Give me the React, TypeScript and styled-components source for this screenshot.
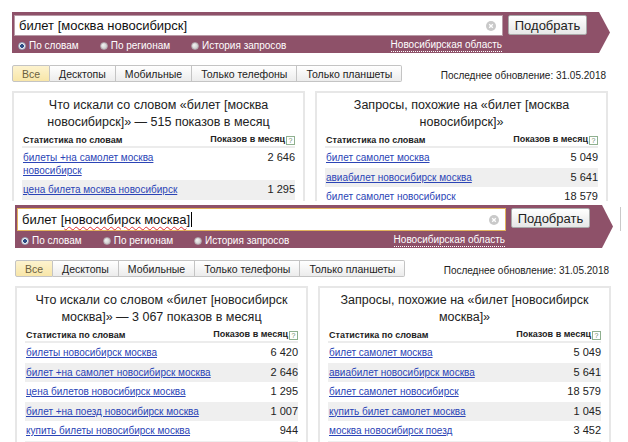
import styled, { createGlobalStyle } from 'styled-components'

type Row = { text: string; count: string }
type Panel = { title: string; rows: Row[] }
type Shot = {
  query: string
  typo?: string
  left: Panel
  right: Panel
}

const GlobalStyle = createGlobalStyle`
  html, body {
    margin: 0;
    padding: 0;
    background: #fff;
  }
  body {
    font-family: "Liberation Sans", Arial, sans-serif;
    color: #222;
  }
`

const Frame = styled.div<{ $x: number; $y: number; $height?: number }>`
  box-sizing: border-box;
  padding: ${(p) => p.$y}px 0 0 ${(p) => p.$x}px;
  height: ${(p) => (p.$height ? `${p.$height}px` : 'auto')};
  overflow: hidden;
  background: #fff;
`

const Inner = styled.div`
  width: 596px;
`

const BarRow = styled.div`
  display: flex;
  align-items: flex-start;
  gap: 7px;
`

const Bar = styled.div<{ $h: number }>`
  flex: none;
  box-sizing: border-box;
  width: 598px;
  height: ${(p) => p.$h}px;
  padding: 3px 0 0 2px;
  background: #8e5169;
  clip-path: polygon(0 0, calc(100% - 11px) 0, 100% 50%, calc(100% - 11px) 100%, 0 100%);
`

const TopLine = styled.div`
  display: flex;
  gap: 5px;
`

const SearchInput = styled.div<{ $focused?: boolean; $h: number }>`
  box-sizing: border-box;
  width: 489px;
  height: ${(p) => p.$h}px;
  display: flex;
  align-items: center;
  padding: 0 6px 0 4px;
  background: #fff;
  border: 1px solid ${(p) => (p.$focused ? '#e2b35c' : '#b89aa6')};
  font-size: 13px;
  color: #111;
`

const QueryText = styled.span`
  flex: 1;
  white-space: nowrap;
`

const Typo = styled.span`
  text-decoration: underline wavy #e03030;
  text-decoration-thickness: 1px;
  text-underline-offset: 2px;
`

const Caret = styled.span`
  display: inline-block;
  width: 1px;
  height: 15px;
  margin-left: 1px;
  vertical-align: -3px;
  background: #000;
`

const ClearIcon = styled.svg`
  flex: none;
  width: 10px;
  height: 10px;
`

const PickButton = styled.button`
  box-sizing: border-box;
  width: 79px;
  height: 20px;
  padding: 0;
  border: 1px solid #a9a9a9;
  border-radius: 2px;
  background: linear-gradient(#ffffff, #e6e6e6);
  font-family: inherit;
  font-size: 13px;
  color: #222;
`

const Options = styled.div`
  box-sizing: border-box;
  width: 489px;
  height: 19px;
  display: flex;
  align-items: center;
  gap: 21px;
  padding-left: 4px;
  font-size: 10px;
  color: #fff;
`

const RadioItem = styled.span`
  display: flex;
  align-items: center;
  gap: 3px;
`

const RadioDot = styled.span<{ $on?: boolean }>`
  box-sizing: border-box;
  width: 8px;
  height: 8px;
  border-radius: 50%;
  background: ${(p) =>
    p.$on
      ? 'radial-gradient(circle, #2c4d86 0 1.6px, #f4f4f4 2.2px)'
      : 'radial-gradient(circle at 35% 35%, #f2f2f2, #bdbdbd)'};
  border: 1px solid ${(p) => (p.$on ? '#9aa8c0' : '#b0a0a8')};
`

const Region = styled.span`
  margin-left: auto;
  margin-right: 1px;
  border-bottom: 1px dotted #fff;
  line-height: 12px;
`

const Sliver = styled.div`
  width: 10px;
  height: 24px;
  margin-top: 2px;
  box-sizing: border-box;
  border: 1px solid #c9c9c9;
  border-right: none;
  background: linear-gradient(#eee 0 6px, #e33a2a 6px 18px, #eee 18px);
`

const TabsLine = styled.div`
  display: flex;
  align-items: center;
  justify-content: space-between;
  margin-top: 12px;
`

const Tabs = styled.div`
  display: flex;
`

const Tab = styled.span<{ $active?: boolean }>`
  box-sizing: border-box;
  height: 17px;
  display: flex;
  align-items: center;
  padding: 0 9px;
  border: 1px solid #c4c4c4;
  border-left-width: 0;
  background: ${(p) => (p.$active ? 'linear-gradient(#fdf3cf, #f8e6a8)' : 'linear-gradient(#fff, #ececec)')};
  font-size: 10.5px;
  color: ${(p) => (p.$active ? '#6a6040' : '#222')};

  &:first-child {
    border-left-width: 1px;
    border-radius: 2px 0 0 2px;
  }
  &:last-child {
    border-radius: 0 2px 2px 0;
  }
`

const Updated = styled.span`
  font-size: 10px;
  color: #222;
  margin-top: 4px;
  margin-right: 2px;
`

const Panels = styled.div`
  display: grid;
  grid-template-columns: 1fr 1fr;
  gap: 10px;
  margin-top: 9px;
`

const Card = styled.div`
  box-sizing: border-box;
  border: 2px solid #e7e7e7;
  padding: 4px 8px 0;
`

const CardTitle = styled.div`
  font-size: 12.5px;
  line-height: 17px;
  text-align: center;
  white-space: pre-line;
  color: #222;
  margin-bottom: 3px;
`

const HeadRow = styled.div`
  display: flex;
  justify-content: space-between;
  align-items: center;
  height: 11px;
  padding: 0 0 1px 1px;
  border-bottom: 2px solid #ececec;
  font-size: 9px;
  font-weight: bold;
  color: #222;
`

const Help = styled.span`
  display: inline-block;
  box-sizing: border-box;
  width: 9px;
  height: 9px;
  margin-left: 1px;
  border: 1px solid #8fb08f;
  font-size: 7px;
  line-height: 7px;
  text-align: center;
  color: #6a8a6a;
  font-weight: normal;
  vertical-align: -1px;
`

const DataRow = styled.div<{ $shaded: boolean }>`
  display: flex;
  justify-content: space-between;
  align-items: flex-start;
  padding: 3px 0 3px 1px;
  min-height: 13.5px;
  background: ${(p) => (p.$shaded ? '#efefef' : 'transparent')};
`

const Phrase = styled.a`
  font-size: 10px;
  line-height: 13px;
  color: #2b44b6;
  text-decoration: underline;
  white-space: pre-line;
`

const Count = styled.span`
  font-size: 11px;
  line-height: 13.5px;
  color: #222;
`

function PanelView({ panel }: { panel: Panel }) {
  return (
    <Card>
      <CardTitle>{panel.title}</CardTitle>
      <HeadRow>
        <span>Статистика по словам</span>
        <span>
          Показов в месяц<Help>?</Help>
        </span>
      </HeadRow>
      {panel.rows.map((row, i) => (
        <DataRow key={i} $shaded={i % 2 === 1}>
          <Phrase>{row.text}</Phrase>
          <Count>{row.count}</Count>
        </DataRow>
      ))}
    </Card>
  )
}

function ShotView({ shot, focused, sliver, barH }: { shot: Shot; focused?: boolean; sliver?: boolean; barH: number }) {
  return (
    <Inner>
      <BarRow>
        <Bar $h={barH}>
          <TopLine>
            <SearchInput $focused={focused} $h={barH - 20}>
              <QueryText>
                {shot.query}
                {shot.typo && <Typo>{shot.typo}</Typo>}
                {shot.typo && ']'}
                {focused && <Caret />}
              </QueryText>
              <ClearIcon viewBox="0 0 10 10">
                <circle cx="5" cy="5" r="5" fill="#c9c9c9" />
                <path d="M3.2 3.2 L6.8 6.8 M6.8 3.2 L3.2 6.8" stroke="#fff" strokeWidth="1.3" />
              </ClearIcon>
            </SearchInput>
            <PickButton>Подобрать</PickButton>
          </TopLine>
          <Options>
            <RadioItem>
              <RadioDot $on />
              По словам
            </RadioItem>
            <RadioItem>
              <RadioDot />
              По регионам
            </RadioItem>
            <RadioItem>
              <RadioDot />
              История запросов
            </RadioItem>
            <Region>Новосибирская область</Region>
          </Options>
        </Bar>
        {sliver && <Sliver />}
      </BarRow>
      <TabsLine>
        <Tabs>
          <Tab $active>Все</Tab>
          <Tab>Десктопы</Tab>
          <Tab>Мобильные</Tab>
          <Tab>Только телефоны</Tab>
          <Tab>Только планшеты</Tab>
        </Tabs>
        <Updated>Последнее обновление: 31.05.2018</Updated>
      </TabsLine>
      <Panels>
        <PanelView panel={shot.left} />
        <PanelView panel={shot.right} />
      </Panels>
    </Inner>
  )
}

const first: Shot = {
  query: 'билет [москва новосибирск]',
  left: {
    title: 'Что искали со словом «билет [москва\nновосибирск]» — 515 показов в месяц',
    rows: [
      { text: 'билеты +на самолет москва\nновосибирск', count: '2 646' },
      { text: 'цена билета москва новосибирск', count: '1 295' },
      { text: 'билет +на поезд москва новосибирск', count: '1 007' },
    ],
  },
  right: {
    title: 'Запросы, похожие на «билет [москва\nновосибирск]»',
    rows: [
      { text: 'билет самолет москва', count: '5 049' },
      { text: 'авиабилет новосибирск москва', count: '5 641' },
      { text: 'билет самолет новосибирск', count: '18 579' },
      { text: 'купить билет самолет москва', count: '1 045' },
    ],
  },
}

const second: Shot = {
  query: 'билет [',
  typo: 'новосибирск москва',
  left: {
    title: 'Что искали со словом «билет [новосибирск\nмосква]» — 3 067 показов в месяц',
    rows: [
      { text: 'билеты новосибирск москва', count: '6 420' },
      { text: 'билет +на самолет новосибирск москва', count: '2 646' },
      { text: 'цена билетов новосибирск москва', count: '1 295' },
      { text: 'билет +на поезд новосибирск москва', count: '1 007' },
      { text: 'купить билеты новосибирск москва', count: '944' },
      { text: 'билеты новосибирск москва поезд', count: '608' },
    ],
  },
  right: {
    title: 'Запросы, похожие на «билет [новосибирск\nмосква]»',
    rows: [
      { text: 'билет самолет москва', count: '5 049' },
      { text: 'авиабилет новосибирск москва', count: '5 641' },
      { text: 'билет самолет новосибирск', count: '18 579' },
      { text: 'купить билет самолет москва', count: '1 045' },
      { text: 'москва новосибирск поезд', count: '3 452' },
      { text: 'авиабилеты москва', count: '2 310' },
    ],
  },
}

export default function App() {
  return (
    <>
      <GlobalStyle />
      <Frame $x={12} $y={12} $height={201}>
        <ShotView shot={first} barH={41} />
      </Frame>
      <Frame $x={15} $y={4}>
        <ShotView shot={second} focused sliver barH={43} />
      </Frame>
    </>
  )
}
